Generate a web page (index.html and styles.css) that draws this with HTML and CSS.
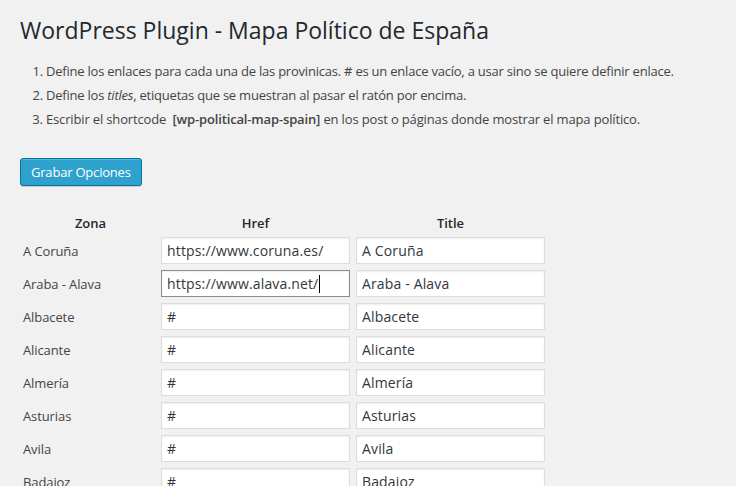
FILE: index.html
```html
<!DOCTYPE html>
<html lang="es">
<head>
<meta charset="utf-8">
<title>Mapa Político de España</title>
<link rel="stylesheet" href="styles.css">
</head>
<body>
<div class="wrap">
  <h1 class="page-title">WordPress Plugin - Mapa Político de España</h1>
  <ol class="steps">
    <li>Define los enlaces para cada una de las provinicas. # es un enlace vacío, a usar sino se quiere definir enlace.</li>
    <li>Define los <em>titles</em>, etiquetas que se muestran al pasar el ratón por encima.</li>
    <li class="step-code">Escribir el shortcode <strong>[wp-political-map-spain]</strong> en los post o páginas donde mostrar el mapa político.</li>
  </ol>
  <button class="button-primary" type="button">Grabar Opciones</button>
  <div class="zones">
    <div class="head">Zona</div>
    <div class="head">Href</div>
    <div class="head">Title</div>

    <div class="label">A Coruña</div>
    <input class="field" type="text" value="https://www.coruna.es/">
    <input class="field" type="text" value="A Coruña">

    <div class="label">Araba - Alava</div>
    <span class="field-wrap"><input class="field focused" type="text" value="https://www.alava.net/"><span class="caret"></span></span>
    <input class="field" type="text" value="Araba - Alava">

    <div class="label">Albacete</div>
    <input class="field" type="text" value="#">
    <input class="field" type="text" value="Albacete">

    <div class="label">Alicante</div>
    <input class="field" type="text" value="#">
    <input class="field" type="text" value="Alicante">

    <div class="label">Almería</div>
    <input class="field" type="text" value="#">
    <input class="field" type="text" value="Almería">

    <div class="label">Asturias</div>
    <input class="field" type="text" value="#">
    <input class="field" type="text" value="Asturias">

    <div class="label">Avila</div>
    <input class="field" type="text" value="#">
    <input class="field" type="text" value="Avila">

    <div class="label">Badajoz</div>
    <input class="field" type="text" value="#">
    <input class="field" type="text" value="Badajoz">
  </div>
</div>
</body>
</html>
```

FILE: styles.css
```css
html, body {
  margin: 0;
  padding: 0;
  background: #f1f1f1;
}
body {
  font-family: "Open Sans", "Noto Sans", sans-serif;
  font-size: 13px;
  color: #444;
  height: 486px;
  overflow: hidden;
}
.wrap {
  padding: 16px 0 0 20px;
}
.page-title {
  margin: 0;
  font-size: 23px;
  font-weight: 400;
  line-height: 29px;
  color: #23282d;
}
.steps {
  margin: 14px 0 0 0;
  padding: 0 0 0 26px;
  line-height: 24px;
  letter-spacing: -0.22px;
}
.steps .step-code {
  letter-spacing: -0.15px;
}
.steps strong {
  font-weight: 600;
  margin-left: 3px;
}
.button-primary {
  display: block;
  margin-top: 27px;
  height: 28px;
  padding: 0 10px;
  font-family: inherit;
  font-size: 13px;
  line-height: 26px;
  letter-spacing: -0.2px;
  color: #fff;
  background: #2ea2cc;
  border: 1px solid #0074a2;
  border-radius: 3px;
  box-shadow: inset 0 1px 0 rgba(120, 200, 230, 0.5), 0 1px 0 rgba(0, 0, 0, 0.15);
  cursor: pointer;
}
.zones {
  margin-top: 27px;
  display: grid;
  grid-template-columns: 141px 189px 195px;
  row-gap: 6px;
  align-items: center;
}
.zones > :nth-child(3n) {
  margin-left: 6px;
}
.head {
  font-weight: 600;
  text-align: center;
  line-height: 20px;
  color: #23282d;
  margin-bottom: -2px;
}
.label {
  padding-left: 3px;
  line-height: 20px;
  letter-spacing: -0.1px;
}
.field {
  box-sizing: border-box;
  width: 189px;
  height: 27px;
  margin: 0;
  padding: 0 5px;
  font-family: inherit;
  font-size: 14px;
  letter-spacing: 0.15px;
  color: #32373c;
  background: #fff;
  border: 1px solid #ddd;
  box-shadow: inset 0 1px 2px rgba(0, 0, 0, 0.07);
  outline: none;
}
.field-wrap {
  position: relative;
  display: block;
  width: 189px;
  height: 27px;
}
.field.focused {
  border-color: #8c8c8c;
}
.caret {
  position: absolute;
  left: 158px;
  top: 5px;
  width: 1px;
  height: 18px;
  background: #000;
}
```
